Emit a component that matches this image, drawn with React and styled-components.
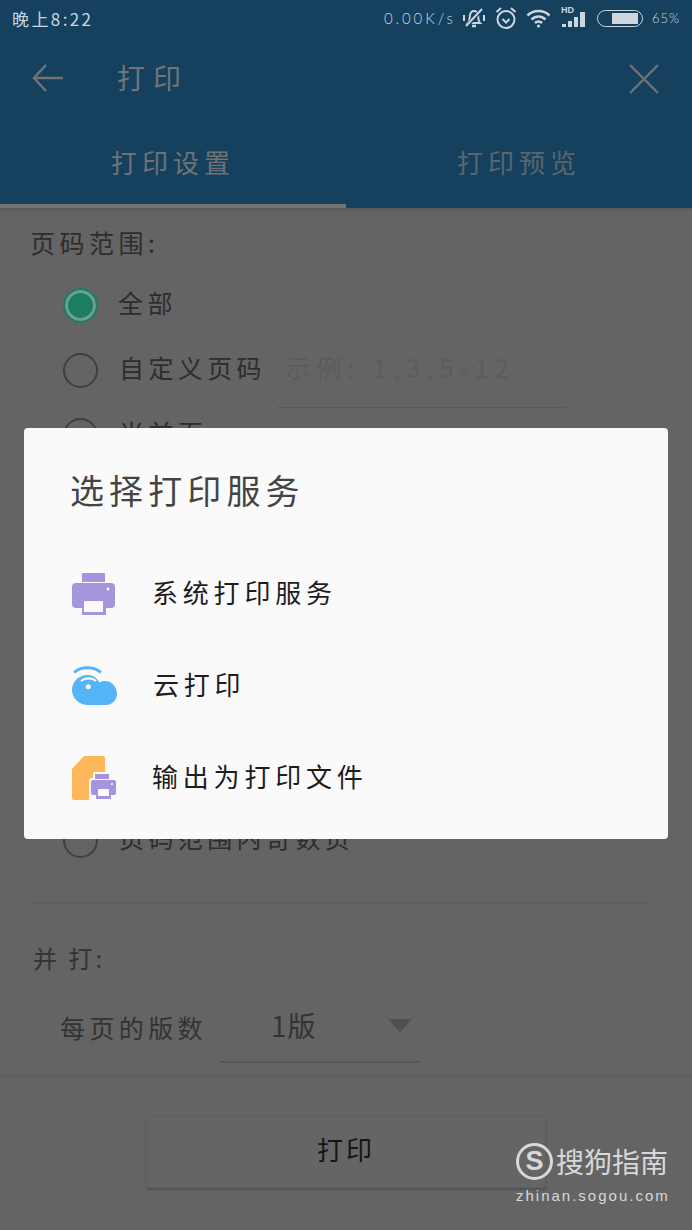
import React from "react";
import styled, { createGlobalStyle } from "styled-components";

const GlobalStyle = createGlobalStyle`
  html, body {
    margin: 0;
    padding: 0;
    background: #646464;
  }
  * {
    box-sizing: border-box;
  }
  body {
    font-family: "Noto Sans CJK SC", "Noto Sans", sans-serif;
  }
`;

const BellOffIcon = () => (
  <svg width="24" height="24" viewBox="0 0 24 24" fill="none" stroke="#ccd6dc" strokeWidth="2">
    <path d="M6 17c2-2 1.500-5 2-8 .5-2.500 2-4 4-4s3.500 1.500 4 4c.5 3 0 6 2 8z" />
    <path d="M10 20h4" strokeWidth="2.500" />
    <path d="M2 9v6M22 9v6" />
    <path d="M4 21 21 2" stroke="#15415f" strokeWidth="4" />
    <path d="M4 20 20 3" />
  </svg>
);

const AlarmIcon = () => (
  <svg width="22" height="24" viewBox="0 0 22 24" fill="none" stroke="#ccd6dc" strokeWidth="2">
    <circle cx="11" cy="13.500" r="8.500" />
    <path d="M7.500 13l3.500 3.500 3.500-3.500" />
    <path d="M1.500 6 6 2M20.500 6 16 2" />
  </svg>
);

const WifiIcon = () => (
  <svg width="25" height="20" viewBox="0 0 25 20" fill="none" stroke="#ccd6dc" strokeWidth="2.600">
    <path d="M1.500 7.500c6-6 16-6 22 0" />
    <path d="M5.500 11.500c4-4 10-4 14 0" />
    <path d="M9 15c2-2 5-2 7 0" />
    <circle cx="12.500" cy="18" r="1.600" fill="#ccd6dc" stroke="none" />
  </svg>
);

const SignalIcon = () => (
  <svg width="28" height="20" viewBox="0 0 28 20" fill="#ccd6dc">
    <rect x="2" y="16" width="4" height="3" />
    <rect x="8" y="13" width="4" height="6" />
    <rect x="14" y="9" width="4" height="10" />
    <rect x="20" y="4" width="5" height="15" />
  </svg>
);

const PrinterIcon = () => (
  <svg width="44" height="44" viewBox="0 0 44 44">
    <rect x="10" y="1" width="23" height="9" fill="#a595dd" />
    <path d="M4 11h35a4 4 0 0 1 4 4v17a4 4 0 0 1-4 4h-5v7H10v-7H4a4 4 0 0 1-4-4V15a4 4 0 0 1 4-4z" fill="#a595dd" />
    <rect x="12" y="29" width="19" height="11" fill="#fafafa" />
    <circle cx="36" cy="17" r="1.500" fill="#fafafa" />
  </svg>
);

const CloudIcon = () => (
  <svg width="45" height="40" viewBox="0 0 45 40" fill="none">
    <path d="M15.500 9C21 9 25 12 27.500 16.500C29 15.500 31 15 33 15C40 15 45 21 45 28C45 34 40 39 34 39L15.500 39C7 39 0 32 0 24C0 15.500 7 9 15.500 9z" fill="#55b4f6" />
    <path d="M2 6.500C9 0 22 0 29 6.500" stroke="#55b4f6" strokeWidth="3" />
    <path d="M9 15c4-3.500 11-3.500 15 0" stroke="#fafafa" strokeWidth="2.200" />
    <circle cx="16.300" cy="20.700" r="2.500" fill="#fafafa" />
  </svg>
);

const FileIcon = () => (
  <svg width="44" height="44" viewBox="0 0 44 44">
    <path d="M12 0h19a2 2 0 0 1 2 2v40a2 2 0 0 1-2 2H2a2 2 0 0 1-2-2V13z" fill="#fdb65a" />
    <path d="M21 16H40V22H42a3 3 0 0 1 3 3V44H17V25a3 3 0 0 1 4-3z" fill="#fafafa" />
    <rect x="23" y="18" width="14" height="5" fill="#a595dd" />
    <path d="M21 24h21a2 2 0 0 1 2 2v11a2 2 0 0 1-2 2h-3v4H24v-4h-3a2 2 0 0 1-2-2V26a2 2 0 0 1 2-2z" fill="#a595dd" />
    <rect x="26" y="33" width="11" height="7" fill="#fafafa" />
    <circle cx="40" cy="28" r="1" fill="#fafafa" />
  </svg>
);

const services = [
  { name: "系统打印服务", icon: <PrinterIcon /> },
  { name: "云打印", icon: <CloudIcon /> },
  { name: "输出为打印文件", icon: <FileIcon /> },
];

const App = () => (
  <Screen>
    <GlobalStyle />
    <Header>
      <StatusBar>
        <Clock>晚上8:22</Clock>
        <StatusIcons>
          <Speed>0.00K/s</Speed>
          <BellOffIcon />
          <AlarmIcon />
          <WifiIcon />
          <SignalWrap>
            <HdMark>HD</HdMark>
            <SignalIcon />
          </SignalWrap>
          <Battery>
            <BatteryFill />
          </Battery>
          <Percent>65%</Percent>
        </StatusIcons>
      </StatusBar>
      <Toolbar>
        <svg width="32" height="30" viewBox="0 0 32 30" fill="none" stroke="#6f7375" strokeWidth="2.400">
          <path d="M31 15H3M14 2 2 15l12 13" />
        </svg>
        <Title>打印</Title>
        <CloseIcon width="32" height="32" viewBox="0 0 32 32" fill="none" stroke="#6f7375" strokeWidth="2.400">
          <path d="M2 2l28 28M30 2 2 30" />
        </CloseIcon>
      </Toolbar>
      <Tabs>
        <Tab $active>打印设置</Tab>
        <Tab>打印预览</Tab>
      </Tabs>
    </Header>

    <Content>
      <SectionLabel>页码范围:</SectionLabel>
      <RadioRow>
        <Radio $checked />
        <RadioText $first>全部</RadioText>
      </RadioRow>
      <RadioRow>
        <Radio />
        <RadioText>自定义页码</RadioText>
        <PageInput>示例: 1,3,5-12</PageInput>
      </RadioRow>
      <RadioRow>
        <Radio />
        <RadioText>当前页</RadioText>
      </RadioRow>
      <RadioRow $last>
        <Radio />
        <RadioText>页码范围内奇数页</RadioText>
      </RadioRow>
      <Divider />
      <NupLabel>并 打:</NupLabel>
      <NupRow>
        <NupText>每页的版数</NupText>
        <Select>
          <span>1版</span>
          <Caret />
        </Select>
      </NupRow>
    </Content>

    <Footer>
      <PrintButton>打印</PrintButton>
    </Footer>

    <Dialog>
      <DialogTitle>选择打印服务</DialogTitle>
      {services.map((service) => (
        <Service key={service.name}>
          {service.icon}
          <ServiceName>{service.name}</ServiceName>
        </Service>
      ))}
    </Dialog>

    <Watermark>
      <Brand>
        <BrandMark>S</BrandMark>
        <BrandName>搜狗指南</BrandName>
      </Brand>
      <BrandUrl>zhinan.sogou.com</BrandUrl>
    </Watermark>
  </Screen>
);

const Screen = styled.div`
  position: relative;
  display: flex;
  flex-direction: column;
  width: 692px;
  height: 1230px;
  overflow: hidden;
  background: #646464;
  color: #2d2d2d;
`;

const Header = styled.header`
  height: 208px;
  background: #15415f;
  box-shadow: 0 2px 3px rgba(0, 0, 0, 0.12);
`;

const StatusBar = styled.div`
  display: flex;
  align-items: center;
  justify-content: space-between;
  height: 36px;
  padding: 0 12px;
  color: #ccd6dc;
`;

const Clock = styled.span`
  font-size: 17px;
  letter-spacing: 2.400px;
  white-space: nowrap;
`;

const StatusIcons = styled.div`
  display: flex;
  align-items: center;
  gap: 9px;
`;

const Speed = styled.span`
  width: 69px;
  font-family: "Lato", sans-serif;
  font-size: 15px;
  font-weight: 300;
  letter-spacing: 2.900px;
  white-space: nowrap;
`;

const SignalWrap = styled.div`
  position: relative;
  display: flex;
  width: 28px;
  height: 20px;
`;

const HdMark = styled.span`
  position: absolute;
  top: -3px;
  left: 1px;
  font-family: "Liberation Sans", sans-serif;
  font-size: 9px;
  font-weight: 700;
  line-height: 10px;
`;

const Battery = styled.div`
  display: flex;
  justify-content: flex-end;
  width: 46px;
  height: 17px;
  padding: 2px 4px 2px 0;
  border: 1.500px solid #ccd6dc;
  border-radius: 9px;
`;

const BatteryFill = styled.div`
  width: 26px;
  background: #ccd6dc;
`;

const Percent = styled.span`
  width: 28px;
  font-family: "Lato", sans-serif;
  font-size: 13px;
  font-weight: 300;
  letter-spacing: 1px;
  white-space: nowrap;
`;

const Toolbar = styled.div`
  display: flex;
  align-items: center;
  height: 84px;
  padding: 0 32px;
`;

const Title = styled.h1`
  flex: 1;
  margin: -3px 0 0 53px;
  color: #717577;
  font-size: 28px;
  font-weight: 400;
  letter-spacing: 8px;
`;

const CloseIcon = styled.svg`
  margin-top: 2px;
`;

const Tabs = styled.div`
  display: grid;
  grid-template-columns: 346px 346px;
  height: 88px;
`;

const Tab = styled.div`
  display: flex;
  justify-content: center;
  padding-top: 22px;
  border-bottom: 4px solid ${(p) => (p.$active ? "#737373" : "transparent")};
  color: ${(p) => (p.$active ? "#6f7375" : "#5a666e")};
  font-size: 26px;
  line-height: 40px;
  letter-spacing: 5px;
`;

const Content = styled.main`
  display: flex;
  flex: 1;
  flex-direction: column;
  padding: 0 44px 0 30px;
`;

const SectionLabel = styled.div`
  height: 65px;
  padding-top: 16px;
  font-size: 25px;
  line-height: 36px;
  letter-spacing: 4.500px;
`;

const RadioRow = styled.div`
  display: flex;
  align-items: center;
  gap: 21px;
  height: 65px;
  margin-left: 33px;
  margin-top: ${(p) => (p.$last ? "340px" : "0")};
`;

const Radio = styled.span`
  flex: none;
  width: 35px;
  height: 35px;
  border: 2px solid ${(p) => (p.$checked ? "#1c7f65" : "#3f3f3f")};
  border-radius: 50%;
  background: ${(p) => (p.$checked ? "#1c7f65" : "transparent")};
  box-shadow: ${(p) => (p.$checked ? "inset 0 0 0 3px #6f9f90" : "none")};
`;

const RadioText = styled.span`
  margin-top: -7px;
  margin-left: ${(p) => (p.$first ? "-1px" : "0")};
  font-size: 25px;
  letter-spacing: 4.400px;
  white-space: nowrap;
`;

const PageInput = styled.div`
  flex: none;
  width: 289px;
  height: 70px;
  margin: 5px 0 0 -10px;
  padding: 11px 0 0 8px;
  border-bottom: 1px solid #595959;
  color: #5c5c5c;
  font-size: 25px;
  letter-spacing: 6.300px;
  white-space: nowrap;
`;

const Divider = styled.hr`
  width: 620px;
  height: 1px;
  margin: 30px 0 0 -2px;
  border: 0;
  background: #5e5e5e;
`;

const NupLabel = styled.div`
  margin: 36px 0 0 3px;
  font-size: 24px;
  line-height: 36px;
  letter-spacing: 3px;
  color: #333;
`;

const NupRow = styled.div`
  display: flex;
  align-items: center;
  height: 72px;
  margin: 15px 0 0 30px;
`;

const NupText = styled.span`
  width: 160px;
  font-size: 25px;
  letter-spacing: 4.400px;
  color: #333;
`;

const Select = styled.div`
  display: flex;
  align-items: center;
  justify-content: space-between;
  width: 201px;
  height: 72px;
  padding: 0 9px 2px 51px;
  border-bottom: 2px solid #575757;
  font-size: 28px;
  letter-spacing: 1px;
  color: #333;
`;

const Caret = styled.span`
  width: 0;
  height: 0;
  border-top: 13px solid #505050;
  border-right: 12px solid transparent;
  border-left: 12px solid transparent;
`;

const Footer = styled.footer`
  display: flex;
  justify-content: center;
  height: 154px;
  padding-top: 39px;
  border-top: 1px solid #5e5e5e;
`;

const PrintButton = styled.button`
  width: 400px;
  height: 72px;
  padding-bottom: 8px;
  border: 1px solid #5f5f5f;
  border-radius: 2px;
  background: #656565;
  box-shadow: 0 2px 2px rgba(0, 0, 0, 0.18);
  color: #151515;
  font-family: inherit;
  font-size: 26px;
  letter-spacing: 3px;
`;

const Dialog = styled.section`
  position: absolute;
  top: 428px;
  left: 24px;
  width: 644px;
  height: 411px;
  padding: 33px 46px 0;
  border-radius: 4px;
  background: #fafafa;
`;

const DialogTitle = styled.h2`
  margin: 0 0 38px;
  color: #444;
  font-size: 34px;
  font-weight: 400;
  line-height: 58px;
  letter-spacing: 5.100px;
`;

const Service = styled.div`
  display: flex;
  align-items: center;
  gap: 36px;
  height: 92px;
  margin-top: -9px;
  margin-bottom: 9px;
  padding-left: 2px;
`;

const ServiceName = styled.span`
  margin-top: -6px;
  color: #1d1d1d;
  font-size: 26px;
  letter-spacing: 4.800px;
`;

const Watermark = styled.div`
  position: absolute;
  top: 1141px;
  left: 516px;
  color: #d8d8d8;
`;

const Brand = styled.div`
  display: flex;
  align-items: center;
  gap: 3px;
`;

const BrandMark = styled.span`
  display: flex;
  align-items: center;
  justify-content: center;
  width: 37px;
  height: 37px;
  border: 3px solid #d8d8d8;
  border-radius: 50%;
  font-family: "Liberation Sans", sans-serif;
  font-size: 27px;
  font-weight: 700;
`;

const BrandName = styled.span`
  font-size: 28px;
  line-height: 40px;
`;

const BrandUrl = styled.div`
  margin-top: 5px;
  font-family: "Liberation Sans", sans-serif;
  font-size: 15px;
  line-height: 20px;
  letter-spacing: 2px;
  white-space: nowrap;
`;

export default App;
